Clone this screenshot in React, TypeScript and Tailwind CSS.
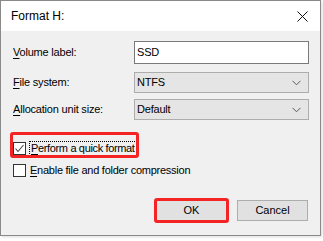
import React from "react";

const font = { fontFamily: '"Liberation Sans", Arial, sans-serif' };

function Chevron() {
  return (
    <svg width="9" height="6" viewBox="0 0 9 6" className="block">
      <path d="M0.5 0.8 L4.5 4.8 L8.5 0.8" fill="none" stroke="#5a5a5a" strokeWidth="1" />
    </svg>
  );
}

function Select({ value }: { value: string }) {
  return (
    <div className="h-[21px] w-[175px] border border-[#adadad] bg-[#e5e5e5] flex items-center justify-between pl-[2px] pr-[7px]">
      <span className="text-[11px] tracking-[-0.2px] text-black">{value}</span>
      <Chevron />
    </div>
  );
}

function Label({ u, rest }: { u: string; rest: string }) {
  return (
    <span className="text-[11px] tracking-[-0.2px] text-black leading-none whitespace-nowrap">
      <span className="underline underline-offset-[2px]">{u}</span>
      {rest}
    </span>
  );
}

export default function App() {
  return (
    <div className="w-[323px] h-[241px] bg-white relative overflow-hidden" style={font}>
      <div className="w-[321px] h-[236px] border border-[#8a8a8a] flex flex-col bg-[#f0f0f0] shadow-[1px_1px_3px_rgba(0,0,0,0.15)]">
        <div className="h-[30px] bg-white flex items-center justify-between pl-[10px] pr-[12px] shrink-0">
          <span className="text-[12px] text-black">Format H:</span>
          <svg width="11" height="11" viewBox="0 0 11 11">
            <path d="M0.5 0.5 L10.5 10.5 M10.5 0.5 L0.5 10.5" stroke="#111" strokeWidth="1" />
          </svg>
        </div>
        <div className="flex-1 flex flex-col pl-[12px] pr-[11px] pt-[10px]">
          <div className="grid grid-cols-[121px_175px] items-center">
            <Label u="V" rest="olume label:" />
            <div className="h-[23px] w-[175px] border border-[#7a7a7a] bg-white flex items-center pl-[2px]">
              <span className="text-[11px] tracking-[-0.2px] text-black">SSD</span>
            </div>
          </div>
          <div className="grid grid-cols-[121px_175px] items-center mt-[8px]">
            <Label u="F" rest="ile system:" />
            <Select value="NTFS" />
          </div>
          <div className="grid grid-cols-[121px_175px] items-center mt-[6px]">
            <Label u="A" rest="llocation unit size:" />
            <Select value="Default" />
          </div>

          <div className="mt-[21px] flex">
            <div className="relative flex items-center h-[14px]">
              <div className="w-[13px] h-[13px] border border-[#333] bg-white flex items-center justify-center shrink-0">
                <svg width="11" height="11" viewBox="0 0 11 11">
                  <path d="M1.5 5.5 L4 8.5 L9.5 2" fill="none" stroke="#444" strokeWidth="1.1" />
                </svg>
              </div>
              <span className="ml-[3px] px-[1px] border border-dotted border-black text-[11px] tracking-[-0.35px] text-black leading-[13px] whitespace-nowrap">
                <span className="underline underline-offset-[2px]">P</span>erform a quick format
              </span>
              <div className="absolute left-[-3px] right-[-2px] top-[-9px] h-[26px] border-[3px] border-[#f52424] rounded-[3px] pointer-events-none" />
            </div>
          </div>

          <div className="mt-[8px] flex items-center h-[14px]">
            <div className="w-[13px] h-[13px] border border-[#333] bg-white shrink-0" />
            <span className="ml-[4px] text-[11px] tracking-[-0.25px] text-black leading-[13px] whitespace-nowrap">
              <span className="underline underline-offset-[2px]">E</span>nable file and folder compression
            </span>
          </div>

          <div className="mt-[23px] flex justify-end gap-[10px] pr-[1px]">
            <div className="relative">
              <div className="w-[71px] h-[21px] border border-[#adadad] bg-[#e1e1e1] flex items-center justify-center text-[11px] text-black">
                OK
              </div>
              <div className="absolute left-[-2px] top-[-2px] w-[75px] h-[25px] border-[3px] border-[#f52424] rounded-[3px] pointer-events-none" />
            </div>
            <div className="w-[71px] h-[21px] border border-[#adadad] bg-[#e1e1e1] flex items-center justify-center text-[11px] text-black">
              Cancel
            </div>
          </div>
        </div>
      </div>
    </div>
  );
}
